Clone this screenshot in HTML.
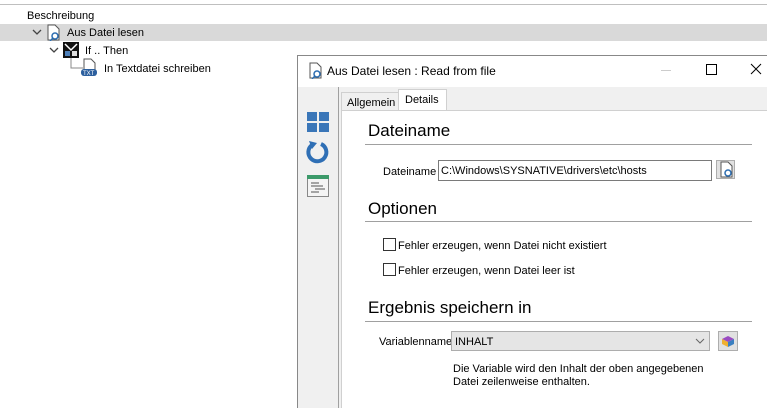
<!DOCTYPE html><html><head><style>
html,body{margin:0;width:767px;height:408px;overflow:hidden}
body{background:#fff;font-family:"Liberation Sans",sans-serif;font-size:11px;color:#000;position:relative}
.a{position:absolute}
.h{font-size:17px;color:#000}
.line{position:absolute;height:1px;background:#a0a0a0}
.cb{position:absolute;width:11px;height:11px;border:1px solid #333;background:#fff}
</style></head><body>
<div class="line" style="left:0;top:4px;width:767px;background:#bfbfbf"></div>
<div class="a" style="left:27px;top:10px">Beschreibung</div>
<div class="a" style="left:0;top:24px;width:767px;height:17px;background:#d9d9d9"></div>
<svg class="a" style="left:32px;top:28px" width="10" height="8"><path d="M1 2l4 4 4-4" stroke="#444" fill="none" stroke-width="1.3"/></svg>
<svg class="a" style="left:45px;top:24px" width="16" height="17"><path d="M3 1h7l4 4v11H3z" fill="#fff" stroke="#555"/><circle cx="10" cy="12" r="3" fill="none" stroke="#2b6cb0" stroke-width="1.5"/><path d="M8 14l-3 3" stroke="#2b6cb0" stroke-width="1.5"/></svg>
<div class="a" style="left:67px;top:27px">Aus Datei lesen</div>
<svg class="a" style="left:49px;top:46px" width="10" height="8"><path d="M1 2l4 4 4-4" stroke="#444" fill="none" stroke-width="1.3"/></svg>
<svg class="a" style="left:63px;top:42px" width="16" height="16"><rect x="0" y="0" width="16" height="16" fill="#111"/><path d="M2 2l6 6 6-6" stroke="#fff" stroke-width="1.5" fill="none"/><rect x="2" y="9" width="5" height="5" fill="#4d7fb8"/><rect x="9" y="9" width="5" height="5" fill="#ddd"/></svg>
<div class="a" style="left:85px;top:45px">If .. Then</div>
<svg class="a" style="left:70px;top:58px" width="30" height="20"><path d="M1 0v10h12" stroke="#888" fill="none"/><path d="M14 1h7l4 4v9H14z" fill="#fff" stroke="#555"/><rect x="11" y="11" width="16" height="7" rx="3" fill="#2c5f9e"/><text x="13" y="17" font-size="6" fill="#fff" font-family="Liberation Sans">TXT</text></svg>
<div class="a" style="left:104px;top:63px">In Textdatei schreiben</div>

<div class="a" style="left:297px;top:55px;width:470px;height:352px;border:1px solid #888;border-right:none;border-bottom:none;background:#f0f0f0"></div>
<div class="a" style="left:298px;top:56px;width:469px;height:31px;background:#fff"></div>
<svg class="a" style="left:307px;top:62px" width="16" height="17"><path d="M3 1h7l4 4v11H3z" fill="#fff" stroke="#555"/><circle cx="10" cy="12" r="3" fill="none" stroke="#2b6cb0" stroke-width="1.5"/><path d="M8 14l-3 3" stroke="#2b6cb0" stroke-width="1.5"/></svg>
<div class="a" style="left:327px;top:64px;font-size:12px">Aus Datei lesen : Read from file</div>
<div class="a" style="left:661px;top:70px;width:10px;height:1px;background:#ccc"></div>
<div class="a" style="left:706px;top:64px;width:9px;height:9px;border:1px solid #000"></div>
<svg class="a" style="left:750px;top:63px" width="12" height="12"><path d="M1 1l10 10M11 1L1 11" stroke="#000"/></svg>
<div class="a" style="left:338px;top:87px;width:1px;height:321px;background:#a0a0a0"></div>
<svg class="a" style="left:307px;top:112px" width="22" height="20"><rect x="0" y="0" width="10" height="9" fill="#3a76b8"/><rect x="12" y="0" width="10" height="9" fill="#3a76b8"/><rect x="0" y="11" width="10" height="9" fill="#3a76b8"/><rect x="12" y="11" width="10" height="9" fill="#3a76b8"/></svg>
<svg class="a" style="left:306px;top:140px" width="24" height="24"><path d="M15 4A9 9 0 1 1 6 5" stroke="#2f6fb5" stroke-width="4" fill="none"/><path d="M3 1l8 2-5 6z" fill="#2f6fb5"/></svg>
<svg class="a" style="left:307px;top:175px" width="22" height="22"><rect x="0.5" y="0.5" width="21" height="21" fill="#f4f4f4" stroke="#888"/><rect x="0" y="0" width="22" height="4" fill="#3c9a6a"/><path d="M4 8h8M4 11h12M8 14h10M4 17h8" stroke="#555"/></svg>
<div class="a" style="left:341px;top:92px;width:57px;height:18px;border:1px solid #d0d0d0;border-bottom:none;background:#f0f0f0"></div>
<div class="a" style="left:347px;top:97px">Allgemein</div>
<div class="a" style="left:398px;top:89px;width:47px;height:22px;border:1px solid #d0d0d0;border-bottom:none;background:#fff"></div>
<div class="a" style="left:405px;top:94px">Details</div>
<div class="a" style="left:341px;top:110px;width:425px;height:297px;border:1px solid #d0d0d0;border-right:none;border-bottom:none;background:#fff"></div>
<div class="a h" style="left:368px;top:121px">Dateiname</div>
<div class="line" style="left:365px;top:144px;width:387px"></div>
<div class="a" style="left:383px;top:166px">Dateiname</div>
<div class="a" style="left:438px;top:160px;width:272px;height:19px;border:1px solid #7a7a7a"></div>
<div class="a" style="left:441px;top:165px">C:\Windows\SYSNATIVE\drivers\etc\hosts</div>
<div class="a" style="left:716px;top:160px;width:19px;height:19px;background:#e1e1e1;border:1px solid #adadad;box-sizing:border-box"></div>
<svg class="a" style="left:718px;top:161px" width="16" height="17"><path d="M3 1h7l4 4v11H3z" fill="#fff" stroke="#555"/><circle cx="10" cy="12" r="3" fill="none" stroke="#2b6cb0" stroke-width="1.5"/></svg>
<div class="a h" style="left:368px;top:199px">Optionen</div>
<div class="line" style="left:365px;top:221px;width:387px"></div>
<div class="cb" style="left:383px;top:238px"></div>
<div class="a" style="left:398px;top:240px">Fehler erzeugen, wenn Datei nicht existiert</div>
<div class="cb" style="left:383px;top:263px"></div>
<div class="a" style="left:398px;top:265px">Fehler erzeugen, wenn Datei leer ist</div>
<div class="a h" style="left:368px;top:298px">Ergebnis speichern in</div>
<div class="line" style="left:365px;top:321px;width:387px"></div>
<div class="a" style="left:379px;top:336px">Variablenname</div>
<div class="a" style="left:451px;top:331px;width:259px;height:20px;border:1px solid #adadad;background:#e5e5e5;box-sizing:border-box"></div>
<div class="a" style="left:455px;top:336px">INHALT</div>
<svg class="a" style="left:695px;top:338px" width="10" height="7"><path d="M1 1l4 4 4-4" stroke="#666" fill="none"/></svg>
<div class="a" style="left:718px;top:331px;width:20px;height:20px;background:#e1e1e1;border:1px solid #adadad;box-sizing:border-box"></div>
<svg class="a" style="left:720px;top:333px" width="16" height="16"><path d="M2 6l6-3 6 3-6 3z" fill="#9a4bc2"/><path d="M2 6v5l6 3V9z" fill="#f0b030"/><path d="M14 6v5l-6 3V9z" fill="#3a7fc0"/></svg>
<div class="a" style="left:453px;top:363px;line-height:13px">Die Variable wird den Inhalt der oben angegebenen<br>Datei zeilenweise enthalten.</div>
</body></html>
